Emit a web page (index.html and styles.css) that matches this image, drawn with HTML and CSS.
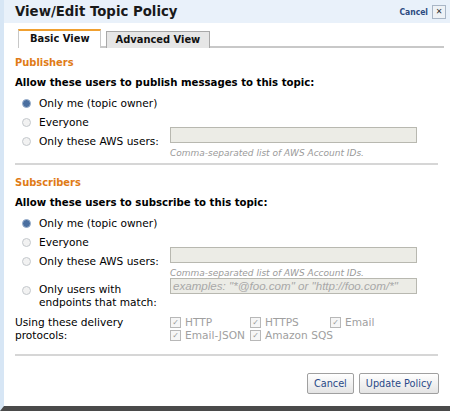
FILE: index.html
```html
<!DOCTYPE html>
<html>
<head>
<meta charset="utf-8">
<link rel="stylesheet" href="styles.css">
</head>
<body>
<div class="dialog">
  <div class="titlebar">
    <span class="title">View/Edit Topic Policy</span>
    <span class="close"><a class="cancel-link">Cancel</a><span class="xbox">✕</span></span>
  </div>
  <div class="body">
    <div class="tabs">
      <div class="tab active">Basic View</div>
      <div class="tab">Advanced View</div>
    </div>

    <div class="section">
      <div class="sec-title">Publishers</div>
      <div class="question">Allow these users to publish messages to this topic:</div>
      <div class="opt"><span class="radio on"></span><span class="lbl">Only me (topic owner)</span></div>
      <div class="opt"><span class="radio"></span><span class="lbl">Everyone</span></div>
      <div class="opt field-row">
        <span class="radio"></span><span class="lbl fixed">Only these AWS users:</span>
        <div class="field"><div class="input"></div><div class="hint">Comma-separated list of AWS Account IDs.</div></div>
      </div>
    </div>
    <div class="sep"></div>

    <div class="section">
      <div class="sec-title">Subscribers</div>
      <div class="question">Allow these users to subscribe to this topic:</div>
      <div class="opt"><span class="radio on"></span><span class="lbl">Only me (topic owner)</span></div>
      <div class="opt"><span class="radio"></span><span class="lbl">Everyone</span></div>
      <div class="opt field-row">
        <span class="radio"></span><span class="lbl fixed">Only these AWS users:</span>
        <div class="field"><div class="input"></div><div class="hint">Comma-separated list of AWS Account IDs.</div></div>
      </div>
      <div class="opt field-row match">
        <span class="radio"></span><span class="lbl fixed">Only users with<br>endpoints that match:</span>
        <div class="field"><div class="input ph">examples: "*@foo.com" or "http://foo.com/*"</div></div>
      </div>
      <div class="proto-row">
        <span class="proto-lbl">Using these delivery<br>protocols:</span>
        <div class="checks">
          <span class="chk"><span class="box">✓</span>HTTP</span>
          <span class="chk"><span class="box">✓</span>HTTPS</span>
          <span class="chk"><span class="box">✓</span>Email</span>
          <span class="chk"><span class="box">✓</span>Email-JSON</span>
          <span class="chk wide"><span class="box">✓</span>Amazon SQS</span>
        </div>
      </div>
    </div>
    <div class="sep"></div>

    <div class="buttons">
      <button class="btn">Cancel</button>
      <button class="btn">Update Policy</button>
    </div>
  </div>
</div>
</body>
</html>
```

FILE: styles.css
```css
html, body {
  margin: 0;
  padding: 0;
  background: #ffffff;
}
body {
  font-family: "DejaVu Sans", Verdana, sans-serif;
  font-size: 10.6px;
  line-height: 14px;
  color: #000;
}
.dialog {
  width: 446px;
  height: 406px;
  border-left: 4px solid #d7e6f5;
  border-bottom: 5px solid #4a4a4a;
  background: #fff;
  display: flex;
  flex-direction: column;
}
.titlebar {
  height: 23px;
  background: #e9f1fa;
  display: flex;
  align-items: center;
  justify-content: space-between;
  padding: 0 4px 0 11px;
  flex: none;
}
.title {
  font-family: "DejaVu Sans", sans-serif;
  font-weight: bold;
  font-size: 13.3px;
  color: #1a1a1a;
}
.close {
  display: flex;
  align-items: center;
  gap: 4px;
}
.cancel-link {
  font-family: "DejaVu Sans Condensed", "DejaVu Sans", sans-serif;
  font-size: 8.5px;
  font-weight: bold;
  color: #2c4a80;
}
.xbox {
  width: 12px;
  height: 12px;
  border: 1px solid #a9b6c6;
  background: #eef2f6;
  font-size: 8px;
  line-height: 12px;
  text-align: center;
  color: #333;
  font-weight: bold;
}
.body {
  padding: 7px 6px 0 11px;
  display: flex;
  flex-direction: column;
}
.tabs {
  display: flex;
  align-items: flex-end;
  gap: 5px;
  border-bottom: 2px solid #c8c8c8;
  margin-left: 3px;
  height: 16px;
}
.tab {
  font-family: "DejaVu Sans Condensed", "DejaVu Sans", sans-serif;
  font-weight: bold;
  font-size: 11px;
  padding: 0 9px;
  height: 16px;
  line-height: 15px;
  border: 1px solid #a8a8a8;
  border-bottom: none;
  background: #e6e6e6;
  color: #111;
  position: relative;
  top: 2px;
}
.tab.active {
  height: 17px;
  background: #fff;
  border-top: 2px solid #f0a030;
  border-left: 1px solid #c8c8c8;
  border-right: 1px solid #c8c8c8;
  line-height: 16px;
  padding: 0 10px 0 11px;
}
.section {
  display: flex;
  flex-direction: column;
}
.sec-title {
  font-family: "DejaVu Sans Condensed", "DejaVu Sans", sans-serif;
  color: #e07b16;
  font-weight: bold;
  font-size: 11px;
  margin-top: 8px;
  height: 14px;
}
.sep + .section .sec-title {
  margin-top: 11px;
}
.question {
  font-family: "DejaVu Sans Condensed", "DejaVu Sans", sans-serif;
  font-weight: bold;
  font-size: 11.3px;
  margin-top: 6px;
  margin-bottom: 1px;
  height: 14px;
}
.opt {
  display: flex;
  align-items: center;
  margin-top: 5px;
  padding-left: 7px;
  height: 14px;
}
.radio {
  width: 7px;
  height: 7px;
  border-radius: 50%;
  border: 1px solid #c4c8cc;
  background: #f2f2f2;
  margin-right: 8px;
  flex: none;
}
.radio.on {
  background: #4a6fa0;
  border-color: #9ab0cc;
}
.lbl {
  white-space: nowrap;
}
.lbl.fixed {
  width: 131px;
}
.field-row {
  align-items: flex-start;
  height: auto;
}
.field-row .radio {
  margin-top: 3px;
}
.field {
  display: flex;
  flex-direction: column;
  margin-top: -7px;
}
.input {
  width: 243px;
  height: 14px;
  border: 1px solid #b8b8b0;
  background: #ecece6;
  font-family: "Liberation Sans", Arial, sans-serif;
  font-style: italic;
  font-size: 11.6px;
  color: #a8a8a8;
  line-height: 14px;
  padding-left: 2px;
}
.hint {
  font-style: italic;
  font-size: 9px;
  color: #9a9a9a;
  margin-top: 4px;
  line-height: 12px;
}
.match {
  margin-top: 4px;
}
.match .lbl {
  line-height: 13px;
}
.match .field {
  margin-top: -5px;
}
.sep {
  height: 2px;
  background: #d6d6d6;
  margin: 4px 6px 0 0;
}
.proto-row {
  display: flex;
  margin-top: 7px;
  margin-bottom: 8px;
  align-items: flex-start;
}
.proto-lbl {
  width: 155px;
  line-height: 13px;
  flex: none;
}
.checks {
  display: grid;
  grid-template-columns: 80px 80px 80px;
  color: #a0a0a0;
  line-height: 13px;
}
.chk {
  display: flex;
  align-items: center;
  white-space: nowrap;
}
.box {
  width: 9px;
  height: 9px;
  border: 1px solid #b8b8b8;
  background: #f6f6f6;
  color: #999;
  font-size: 8px;
  line-height: 9px;
  text-align: center;
  margin-right: 4px;
  flex: none;
}
.buttons {
  display: flex;
  justify-content: flex-end;
  gap: 5px;
  margin-top: 17px;
  margin-right: 5px;
}
.btn {
  font-family: "DejaVu Sans Condensed", "DejaVu Sans", sans-serif;
  font-size: 10.8px;
  color: #2a4a88;
  height: 21px;
  padding: 0 6px;
  border: 1px solid #a0a0a0;
  border-radius: 2px;
  background: linear-gradient(#ffffff, #e4e4e4);
}
```
